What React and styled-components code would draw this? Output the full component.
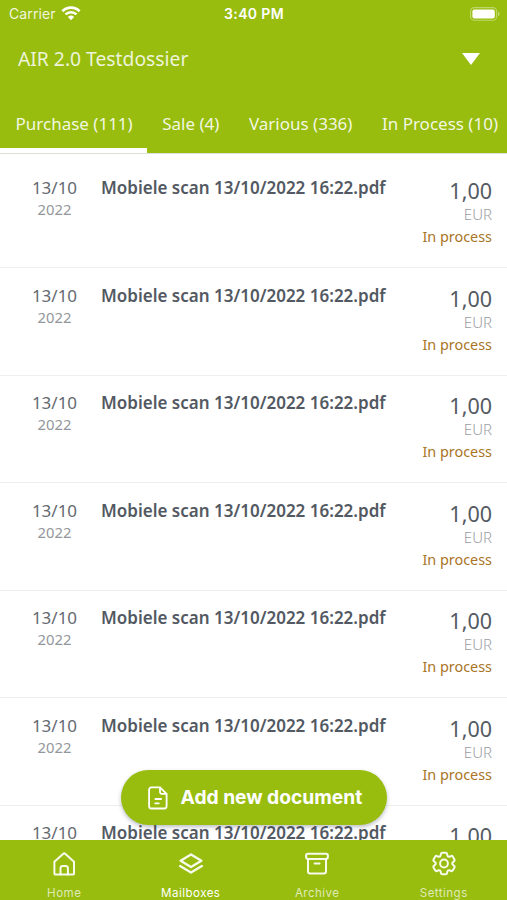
import React from "react";
import styled, { createGlobalStyle } from "styled-components";

const documents = Array.from({ length: 7 }, (_, id) => ({
  id,
  day: "13/10",
  year: "2022",
  name: "Mobiele scan 13/10/2022 16:22.pdf",
  amount: "1,00",
  currency: "EUR",
  status: "In process",
}));

const tabs = ["Purchase (111)", "Sale (4)", "Various (336)", "In Process (10)"];

const WifiIcon = () => (
  <svg width="20" height="15" viewBox="0 0 20 15" fill="none" stroke="#fff">
    <path d="M1.4 5.2a12.3 12.3 0 0 1 17.2 0" strokeWidth="2.7" />
    <path d="M4.5 8.4a7.9 7.9 0 0 1 11 0" strokeWidth="2.5" />
    <path d="M10 14.2 6.9 11a4.5 4.5 0 0 1 6.2 0z" fill="#fff" stroke="none" />
  </svg>
);

const BatteryIcon = () => (
  <svg width="31" height="14" viewBox="0 0 31 14" fill="none">
    <rect x="0.6" y="0.6" width="26" height="12.6" rx="3.8" stroke="#fff" strokeOpacity="0.4" strokeWidth="1.1" />
    <rect x="2.4" y="2.4" width="22.4" height="9" rx="2.2" fill="#fff" />
    <path d="M28.2 4.8v4.4c1.8-.6 1.8-3.8 0-4.4z" fill="#fff" fillOpacity="0.5" />
  </svg>
);

const DocumentIcon = () => (
  <svg width="20" height="24" viewBox="0 0 20 24" fill="none" stroke="#fff" strokeWidth="1.8" strokeLinecap="round" strokeLinejoin="round">
    <path d="M3.3 1.4H12l6.6 6.5v12.4a2.2 2.2 0 0 1-2.2 2.2H3.3a2.2 2.2 0 0 1-2.2-2.2V3.6a2.2 2.2 0 0 1 2.2-2.2z" />
    <path d="M12 1.6v4.2A2.1 2.1 0 0 0 14.1 7.9h4.3M7.4 13h5.7M7.2 17.3h3.6" />
  </svg>
);

const HomeIcon = () => (
  <Glyph viewBox="0 0 26 26">
    <path d="M3.4 10.8 12 2.9a1.8 1.8 0 0 1 2.4 0l8.6 7.9v11.6a1.2 1.2 0 0 1-1.2 1.2H4.6a1.2 1.2 0 0 1-1.2-1.2z" />
    <path d="M9.5 23.4v-6.1a2.4 2.4 0 0 1 2.4-2.4h2.6a2.4 2.4 0 0 1 2.4 2.4v6.1" />
  </Glyph>
);

const MailboxesIcon = () => (
  <Glyph viewBox="0 0 26 26" $width={2.3}>
    <path d="M13 3.4 23.4 9.7 13 16 2.6 9.7z" />
    <path d="M2.1 15 13 21.6 23.9 15" />
  </Glyph>
);

const ArchiveIcon = () => (
  <Glyph viewBox="0 0 26 26">
    <rect x="2.1" y="2.7" width="21.8" height="5.2" rx="1.8" />
    <path d="M4 8.2v12.4a2 2 0 0 0 2 2h14a2 2 0 0 0 2-2V8.2M10.6 12.6h5" />
  </Glyph>
);

const SettingsIcon = () => (
  <Glyph viewBox="0 0 26 26">
    <path d="M11.1 1.7h3.8c.6 0 1 .4 1.1.9l.4 2c.2.8 1.1 1.3 1.9 1.1l2-.7c.5-.2 1.1 0 1.4.5l1.8 3.1c.3.5.2 1.1-.3 1.5l-1.5 1.3c-.7.6-.7 1.6 0 2.2l1.5 1.3c.5.4.6 1 .3 1.5l-1.8 3.1c-.3.5-.9.7-1.4.5l-2-.7c-.8-.2-1.7.3-1.9 1.1l-.4 2c-.1.5-.5.9-1.1.9h-3.8c-.6 0-1-.4-1.1-.9l-.4-2c-.2-.8-1.1-1.3-1.9-1.1l-2 .7c-.5.2-1.1 0-1.4-.5l-1.8-3.1c-.3-.5-.2-1.1.3-1.5l1.5-1.3c.7-.6.7-1.6 0-2.2l-1.5-1.3c-.5-.4-.6-1-.3-1.5l1.8-3.1c.3-.5.9-.7 1.4-.5l2 .7c.8.2 1.7-.3 1.9-1.1l.4-2c.1-.5.5-.9 1.1-.9z" />
    <circle cx="13" cy="12.5" r="3.9" />
  </Glyph>
);

const navItems = [
  { label: "Home", icon: HomeIcon },
  { label: "Mailboxes", icon: MailboxesIcon, active: true },
  { label: "Archive", icon: ArchiveIcon },
  { label: "Settings", icon: SettingsIcon },
];

function App() {
  return (
    <Screen>
      <GlobalStyle />
      <Header>
        <StatusBar>
          <Carrier>
            Carrier
            <WifiIcon />
          </Carrier>
          <Clock>3:40 PM</Clock>
          <Battery>
            <BatteryIcon />
          </Battery>
        </StatusBar>
        <Dossier>
          <DossierName>AIR 2.0 Testdossier</DossierName>
          <Caret />
        </Dossier>
        <Tabs>
          {tabs.map((tab, i) => (
            <Tab key={tab} $active={i === 0}>
              {tab}
            </Tab>
          ))}
        </Tabs>
      </Header>

      <List>
        {documents.map((doc) => (
          <Row key={doc.id}>
            <DateColumn>
              <Day>{doc.day}</Day>
              <Year>{doc.year}</Year>
            </DateColumn>
            <Name>{doc.name}</Name>
            <AmountColumn>
              <Amount>{doc.amount}</Amount>
              <Currency>{doc.currency}</Currency>
              <Status>{doc.status}</Status>
            </AmountColumn>
          </Row>
        ))}
      </List>

      <AddButton>
        <DocumentIcon />
        <ButtonLabel>Add new document</ButtonLabel>
      </AddButton>

      <BottomNav>
        {navItems.map(({ label, icon: Icon, active }) => (
          <NavItem key={label}>
            <Icon />
            <NavLabel $active={active}>{label}</NavLabel>
          </NavItem>
        ))}
      </BottomNav>
    </Screen>
  );
}

export default App;

const GlobalStyle = createGlobalStyle`
  * {
    box-sizing: border-box;
  }

  body {
    margin: 0;
    overflow: hidden;
  }
`;

const Screen = styled.div`
  position: relative;
  display: flex;
  flex-direction: column;
  width: 507px;
  height: 900px;
  overflow: hidden;
  background-color: #fff;
  font-family: "Noto Sans", sans-serif;
  white-space: nowrap;
`;

const Header = styled.header`
  flex: none;
  height: 154px;
  background-color: #98bd0e;
  border-bottom: 1px solid #dce0d8;
  color: #fff;
`;

const StatusBar = styled.div`
  display: grid;
  grid-template-columns: 1fr auto 1fr;
  height: 27px;
  padding: 0 6px 0 9px;
  align-items: center;
  font-family: Inter, sans-serif;
  font-size: 14px;
`;

const Carrier = styled.div`
  display: flex;
  align-items: center;
  gap: 5px;
  color: rgba(255, 255, 255, 0.88);
  letter-spacing: 0.1px;
`;

const Clock = styled.div`
  margin-left: -2px;
  font-weight: 600;
  letter-spacing: 0.35px;
`;

const Battery = styled.div`
  display: flex;
  justify-content: flex-end;
`;

const Dossier = styled.div`
  display: flex;
  justify-content: space-between;
  align-items: center;
  height: 63px;
  padding: 0 27px 0 18px;
`;

const DossierName = styled.div`
  font-size: 19.3px;
  color: rgba(255, 255, 255, 0.85);
`;

const Caret = styled.div`
  border: 9.5px solid transparent;
  border-top: 12px solid #fff;
  border-bottom: 0;
`;

const Tabs = styled.nav`
  display: flex;
  height: 63px;
`;

const Tab = styled.div`
  flex: none;
  height: 63px;
  padding: 0 14px 0 15.5px;
  line-height: 67px;
  font-size: 17px;
  color: rgba(255, 255, 255, 0.9);
  border-bottom: 5px solid ${({ $active }) => ($active ? "#fff" : "transparent")};
`;

const List = styled.main`
  flex: 1;
  min-height: 0;
  padding-top: 6.5px;
  overflow: hidden;
`;

const Row = styled.div`
  display: flex;
  height: 107.5px;
  padding: 15.5px 15px 0 15px;
  border-bottom: 1px solid #eeeeef;
`;

const DateColumn = styled.div`
  width: 79px;
  text-align: center;
`;

const Day = styled.div`
  font-size: 17px;
  line-height: 24px;
  color: #646970;
`;

const Year = styled.div`
  margin-top: -1px;
  font-size: 14.8px;
  line-height: 20px;
  color: #93979b;
`;

const Name = styled.div`
  flex: 1;
  padding-left: 7px;
  font-size: 17px;
  font-weight: 600;
  line-height: 24px;
  color: #535962;
`;

const AmountColumn = styled.div`
  text-align: right;
`;

const Amount = styled.div`
  font-size: 21.5px;
  line-height: 30px;
  color: #555a62;
`;

const Currency = styled.div`
  font-size: 15px;
  font-weight: 300;
  line-height: 16px;
  color: #9b9ea2;
`;

const Status = styled.div`
  margin-top: 5px;
  font-size: 14.4px;
  line-height: 20px;
  color: #a97526;
`;

const AddButton = styled.div`
  position: absolute;
  left: 121px;
  top: 770px;
  display: flex;
  align-items: center;
  gap: 12.5px;
  width: 266px;
  height: 55px;
  padding-left: 27px;
  border-radius: 28px;
  background-color: #98bd0e;
  box-shadow: 0 2px 4px rgba(60, 70, 90, 0.35);
  color: #fff;
`;

const ButtonLabel = styled.span`
  padding-bottom: 1px;
  font-family: Inter, sans-serif;
  font-size: 19.3px;
  font-weight: 700;
  letter-spacing: -0.05px;
`;

const BottomNav = styled.nav`
  display: flex;
  flex: none;
  height: 60px;
  padding-left: 1px;
  background-color: #98bd0e;
`;

const NavItem = styled.div`
  display: flex;
  flex: 1;
  flex-direction: column;
  align-items: center;
  padding-top: 11px;
  color: rgba(255, 255, 255, 0.92);
`;

const Glyph = styled.svg`
  width: 26px;
  height: 26px;
  fill: none;
  stroke: currentColor;
  stroke-width: ${({ $width }) => $width || 2};
  stroke-linecap: round;
  stroke-linejoin: round;
`;

const NavLabel = styled.div`
  margin-top: 9px;
  font-family: Inter, sans-serif;
  font-size: 11.6px;
  line-height: 14px;
  letter-spacing: 0.45px;
  color: ${({ $active }) => ($active ? "#fff" : "rgba(255, 255, 255, 0.7)")};
`;
